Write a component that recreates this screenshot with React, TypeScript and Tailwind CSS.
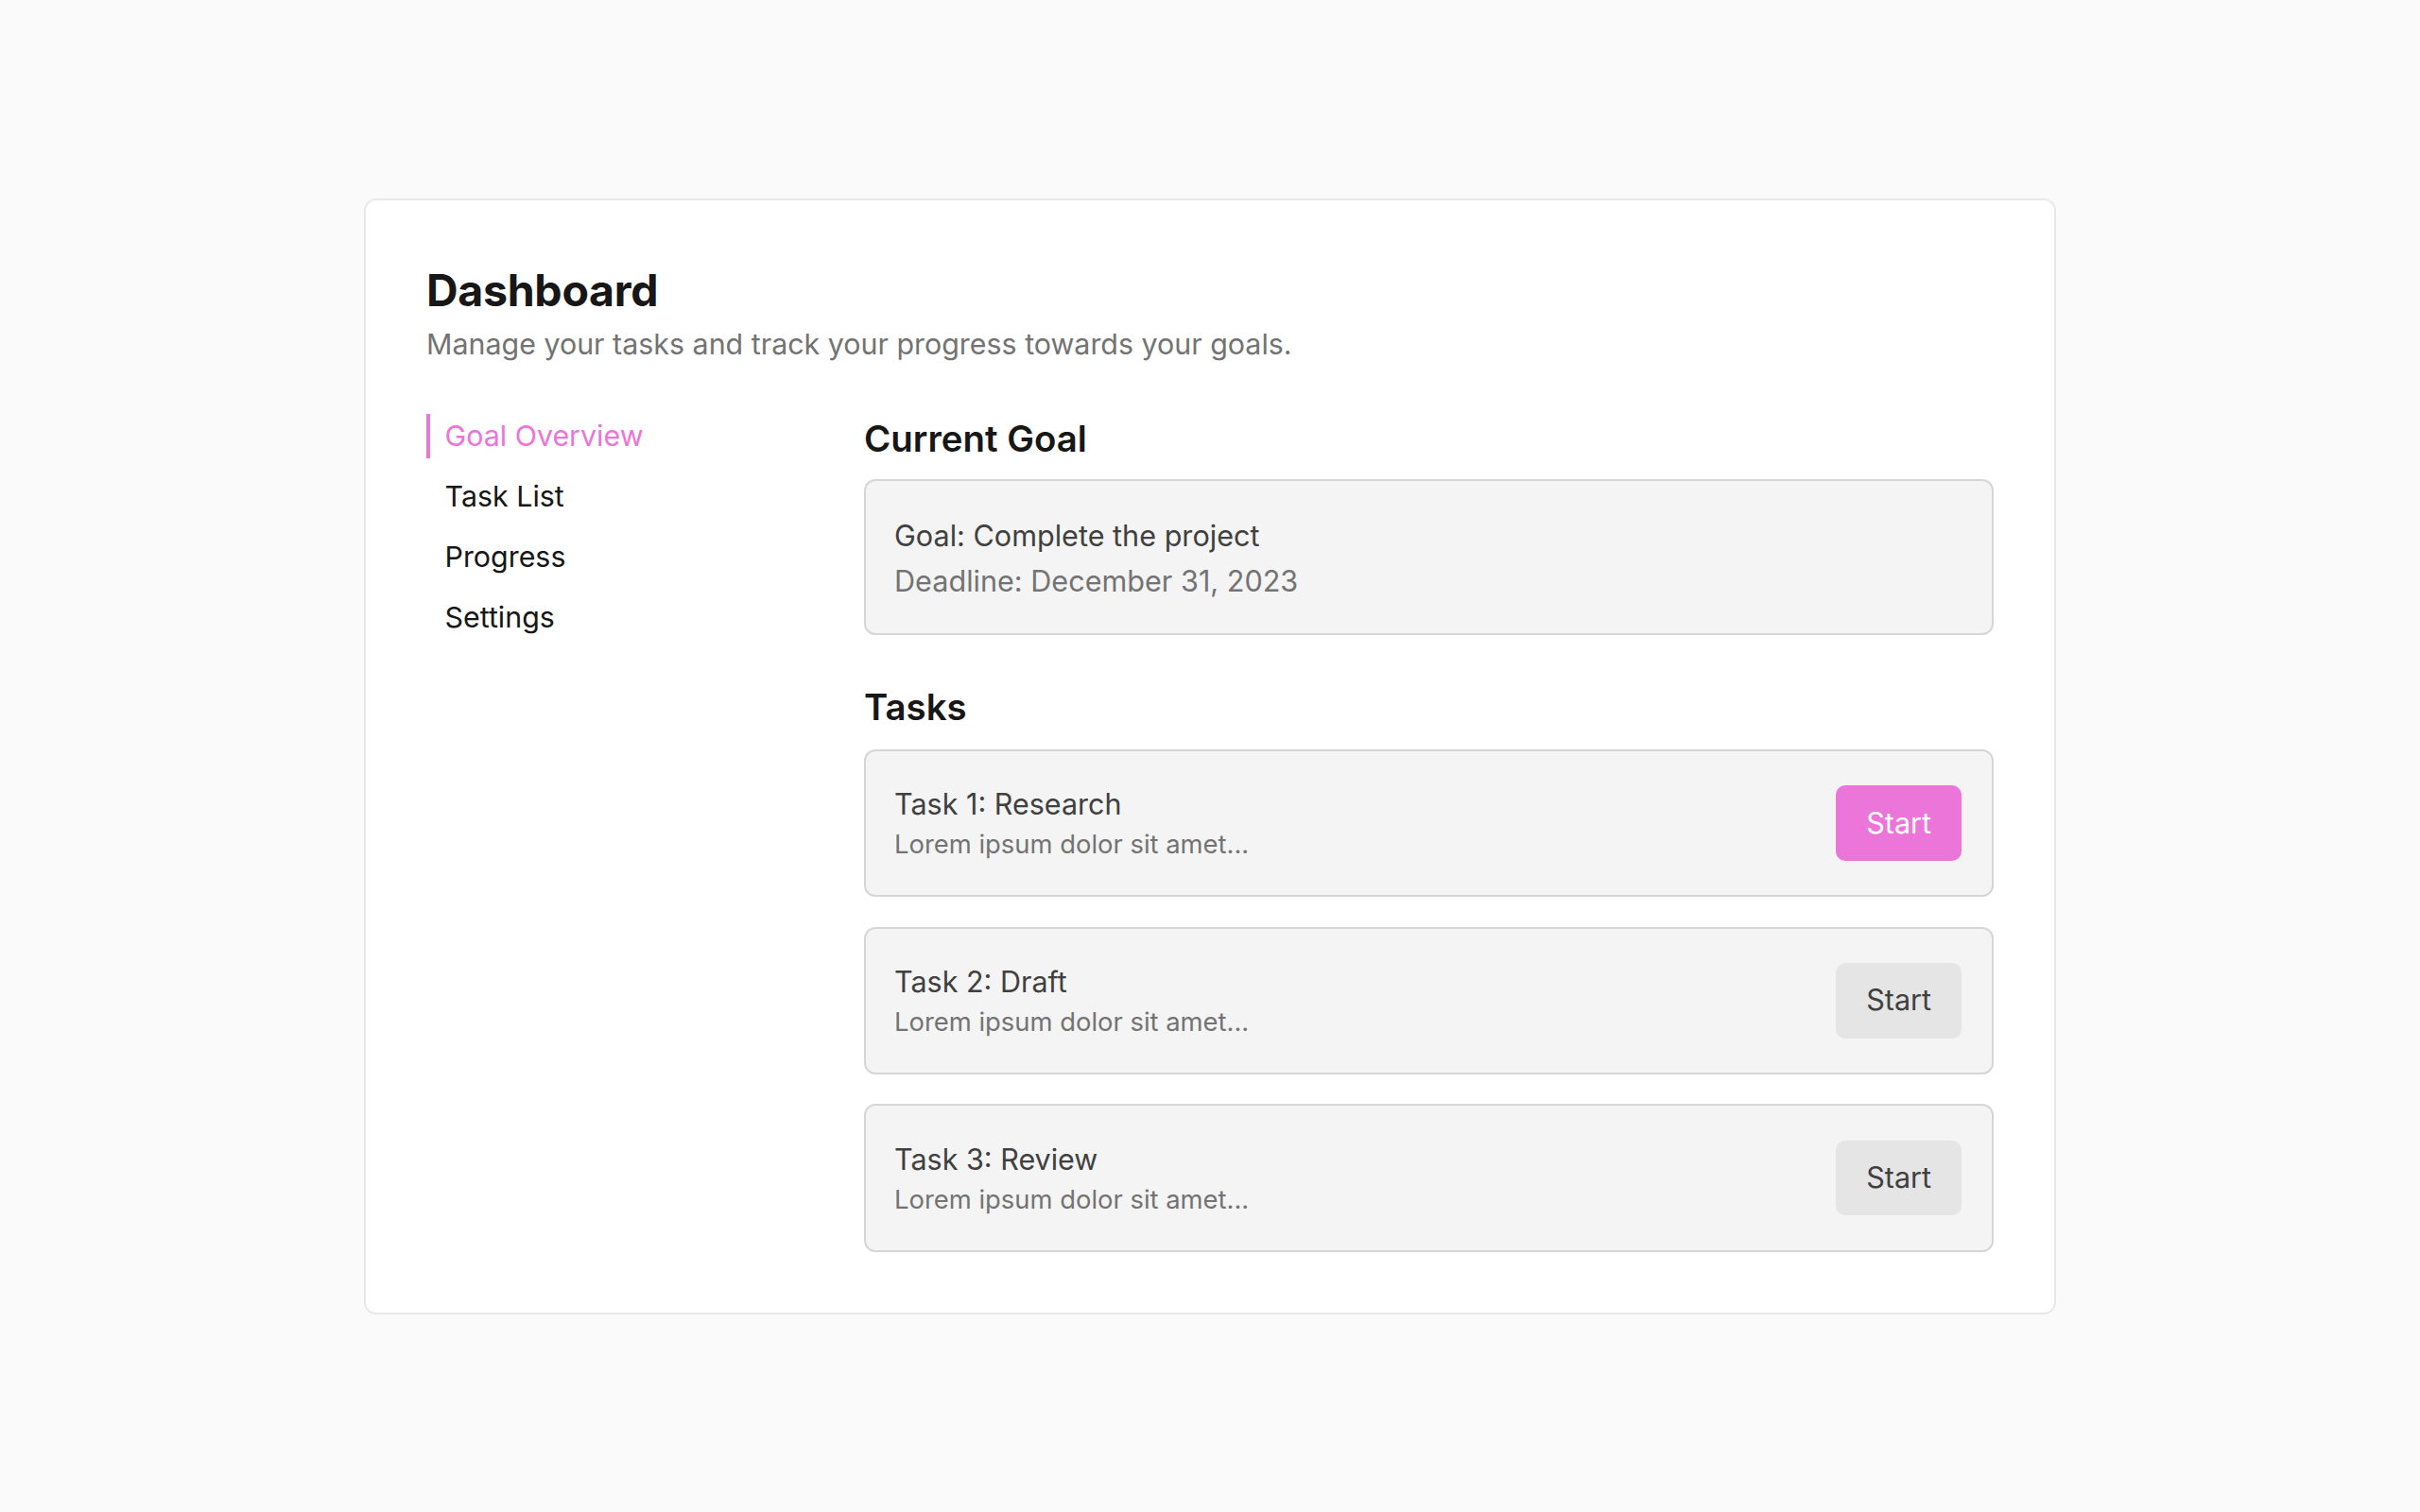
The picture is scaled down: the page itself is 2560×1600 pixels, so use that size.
import React from "react";

type Task = {
  title: string;
  note: string;
  active: boolean;
};

const tasks: Task[] = [
  { title: "Task 1: Research", note: "Lorem ipsum dolor sit amet...", active: true },
  { title: "Task 2: Draft", note: "Lorem ipsum dolor sit amet...", active: false },
  { title: "Task 3: Review", note: "Lorem ipsum dolor sit amet...", active: false },
];

const navItems = ["Goal Overview", "Task List", "Progress", "Settings"];

export default function App() {
  return (
    <div className="min-h-screen bg-[#fafafa] flex items-center justify-center font-['Inter',sans-serif] antialiased">
      <div className="w-[1790px] bg-white border-2 border-[#e8e8e8] rounded-[13px] px-[64px] pt-[67px] pb-[64px]">
        <h1 className="text-[46.5px] leading-[57.6px] font-bold text-[#171717] tracking-[-0.3px]">
          Dashboard
        </h1>
        <p className="mt-[6px] text-[30.4px] leading-[44.8px] text-[#737373]">
          Manage your tasks and track your progress towards your goals.
        </p>

        <div className="mt-[49.5px] flex gap-[49px]">
          <nav className="w-[414px] shrink-0 flex flex-col gap-[17px] pt-[1.5px]">
            {navItems.map((item, i) => (
              <a
                key={item}
                href="#"
                className={
                  i === 0
                    ? "border-l-4 border-[#ec75da] pl-[15.5px] text-[30.4px] leading-[47px] text-[#ec75da]"
                    : "border-l-4 border-transparent pl-[15.5px] text-[30.4px] leading-[47px] text-[#171717]"
                }
              >
                {item}
              </a>
            ))}
          </nav>

          <div className="flex-1">
            <h2 className="pt-[3px] text-[38.4px] leading-[51.2px] font-semibold text-[#171717] mb-[16px]">
              Current Goal
            </h2>
            <div className="bg-[#f4f4f4] border-2 border-[#d6d6d6] rounded-[12px] px-[30px] pt-[36.5px] pb-[32px]">
              <p className="text-[30.6px] leading-[44.8px] text-[#404040]">
                Goal: Complete the project
              </p>
              <p className="mt-[3px] text-[30.6px] leading-[44.8px] text-[#737373]">
                Deadline: December 31, 2023
              </p>
            </div>

            <h2 className="mt-[51px] text-[38.4px] leading-[51.2px] font-semibold text-[#171717] mb-[19px]">
              Tasks
            </h2>
            <div className="flex flex-col gap-[31.5px]">
              {tasks.map((task) => (
                <div
                  key={task.title}
                  className="bg-[#f4f4f4] border-2 border-[#d6d6d6] rounded-[12px] pl-[30px] pr-[32px] py-[34.5px] flex items-center justify-between"
                >
                  <div>
                    <p className="text-[30.5px] leading-[44.8px] text-[#404040]">{task.title}</p>
                    <p className="text-[27.4px] leading-[38.4px] text-[#737373]">{task.note}</p>
                  </div>
                  <button
                    className={
                      task.active
                        ? "bg-[#ec75da] text-white rounded-[10px] px-[32px] py-[17.5px] text-[30.5px] leading-[44.8px]"
                        : "bg-[#e5e5e5] text-[#404040] rounded-[10px] px-[32px] py-[17.5px] text-[30.5px] leading-[44.8px]"
                    }
                  >
                    Start
                  </button>
                </div>
              ))}
            </div>
          </div>
        </div>
      </div>
    </div>
  );
}
